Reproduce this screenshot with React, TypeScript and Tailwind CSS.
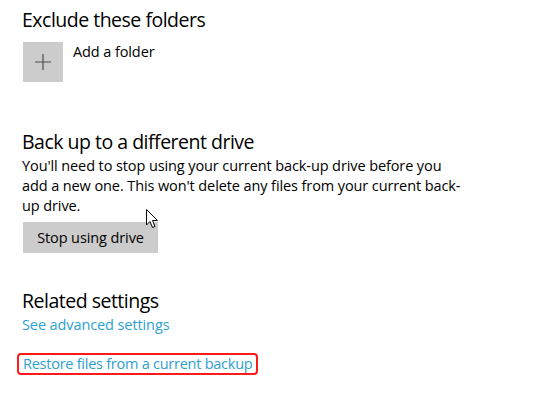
import React from 'react';

function Cursor() {
  return (
    <svg className="absolute left-[146px] top-[209px]" width="13" height="20" viewBox="0 0 13 20">
      <path d="M0.5 0.5 L0.5 16 L4 12.5 L6.5 18.5 L9 17.5 L6.5 11.5 L11.5 11.5 Z" fill="#fff" stroke="#000" strokeWidth="1" />
    </svg>
  );
}

export default function App() {
  return (
    <div className="relative w-[548px] h-[393px] bg-white text-black font-['Open_Sans',sans-serif] overflow-hidden">
      <div className="flex flex-col pl-[22px] pt-[6px]">
        <h2 className="text-[19.5px] leading-[28px] tracking-[-0.5px]">Exclude these folders</h2>

        <div className="flex items-start gap-[10px] mt-[8px]">
          <button className="w-[40px] h-[40px] ml-[1px] bg-[#cccccc] flex items-center justify-center">
            <svg width="16" height="16" viewBox="0 0 16 16">
              <path d="M8 0 V16 M0 8 H16" stroke="#4d4d4d" strokeWidth="1.2" />
            </svg>
          </button>
          <span className="text-[14.5px] leading-[20px] tracking-[-0.1px]">Add a folder</span>
        </div>

        <h2 className="text-[19.5px] leading-[28px] tracking-[-0.5px] mt-[46px]">Back up to a different drive</h2>
        <p className="text-[14.5px] leading-[20px] tracking-[-0.1px] whitespace-nowrap">
          You'll need to stop using your current back-up drive before you
          <br />
          add a new one. This won't delete any files from your current back-
          <br />
          up drive.
        </p>
        <button className="self-start mt-[6px] ml-[1px] w-[135px] h-[31px] bg-[#cccccc] text-[14.5px] tracking-[-0.1px]">
          Stop using drive
        </button>

        <h2 className="text-[19.5px] leading-[28px] tracking-[-0.5px] mt-[34px]">Related settings</h2>
        <a className="text-[14.5px] leading-[20px] tracking-[-0.1px] text-[#2d9fd2] self-start">See advanced settings</a>

        <a className="self-start -ml-[5px] mt-[18px] px-[4px] border-2 border-[#ff1a1a] rounded-[4px] text-[14.5px] leading-[18px] tracking-[-0.25px] text-[#2d9fd2]">
          Restore files from a current backup
        </a>
      </div>
      <Cursor />
    </div>
  );
}
